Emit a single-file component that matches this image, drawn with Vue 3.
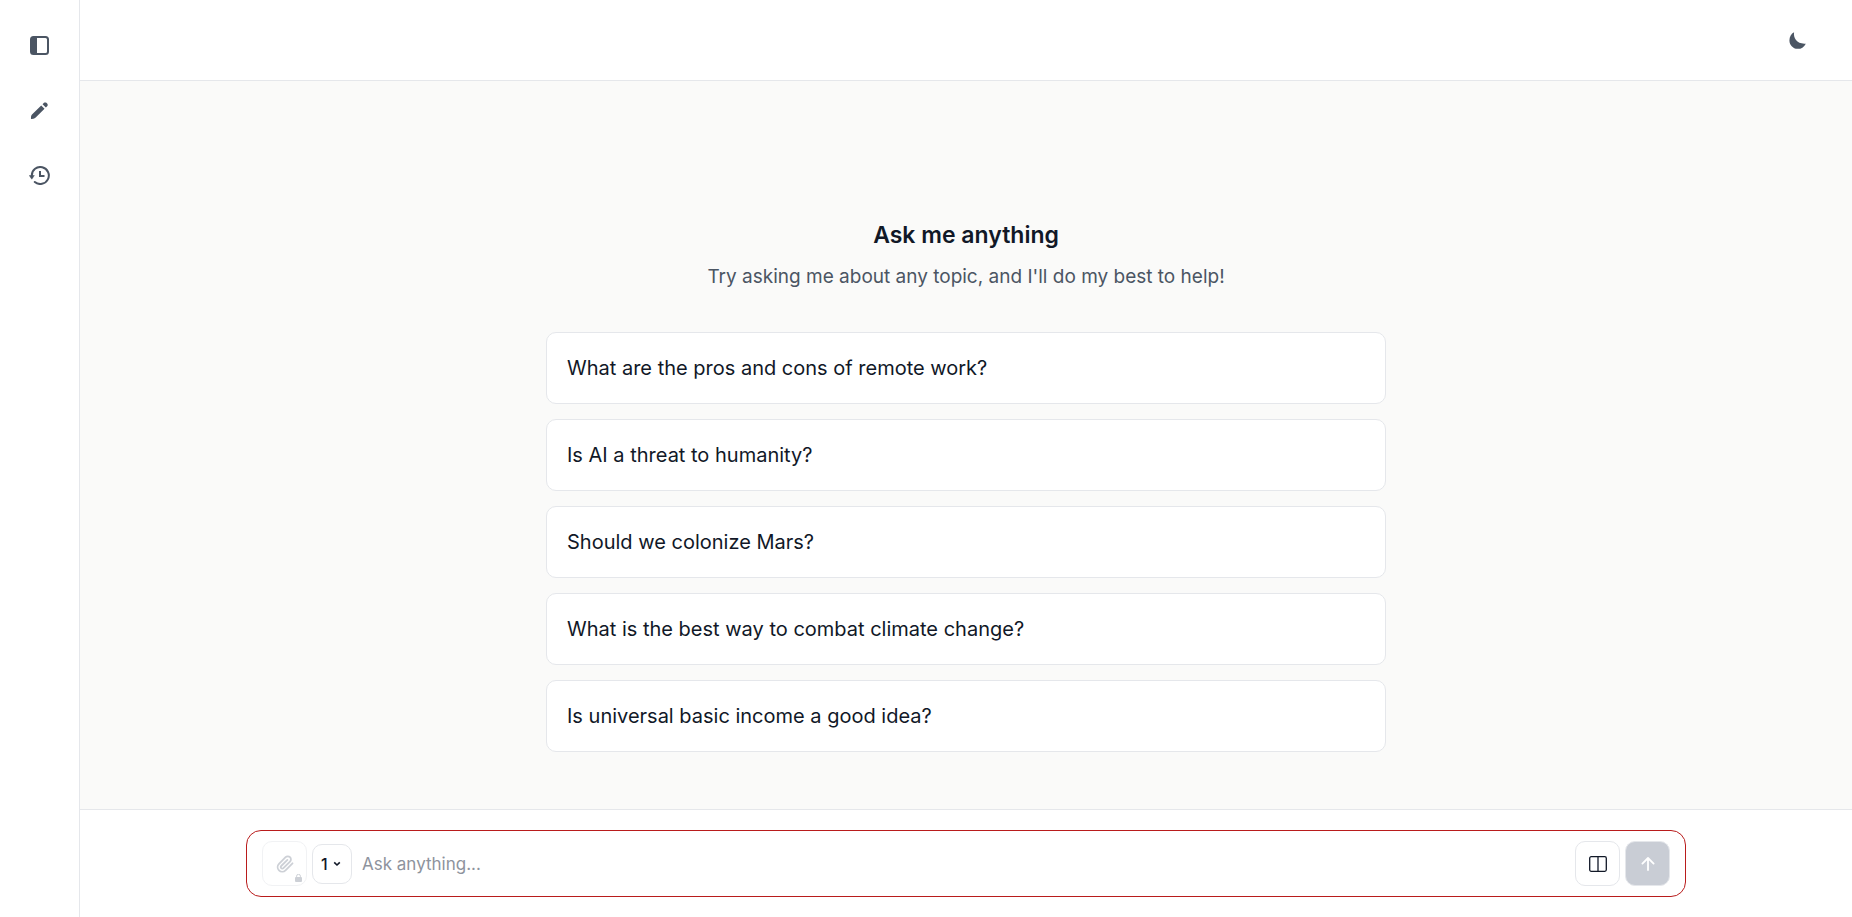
<template>
  <div class="app">
    <aside class="sidebar">
      <button class="icon-btn" type="button" aria-label="Toggle sidebar">
        <svg width="19" height="19" viewBox="0 0 19 19" fill="none">
          <rect x="1" y="1" width="17" height="17" rx="2.5" stroke="currentColor" stroke-width="2" />
          <path d="M1 2h6v15H1z" fill="currentColor" />
        </svg>
      </button>
      <button class="icon-btn" type="button" aria-label="New chat">
        <svg width="19" height="19" viewBox="0 0 20 20" fill="currentColor">
          <path d="M11.8 4.7 15.3 8.2 6 17.4C5.3 18.1 4.5 18.5 3.6 18.7L1.6 19C1.2 19 .9 18.7 1 18.3L1.1 16.4C1.2 15.6 1.5 14.9 2.1 14.3Z" />
          <path d="M13.2 3.3 14.7 1.8C17 .6 19.6 3.2 18.3 5.2L16.7 6.8Z" />
        </svg>
      </button>
      <button class="icon-btn" type="button" aria-label="History">
        <svg width="21" height="19" viewBox="0 0 21 19" fill="none" stroke="currentColor" stroke-width="2">
          <path d="M2.8 11V9.5a8.5 8.5 0 1 1 3 6.500" stroke-linecap="round" />
          <path d="M.3 9.500h5L2.800 13.200Z" fill="currentColor" stroke="currentColor" stroke-width=".5" />
          <path d="M11 5v5h4.500" />
        </svg>
      </button>
    </aside>

    <div class="page">
      <header class="topbar">
        <button class="icon-btn" type="button" aria-label="Dark mode">
          <svg width="19" height="19" viewBox="0 0 20 20" fill="currentColor">
            <path d="M6.4 1.4C5.3 7.6 9.8 14.2 18.8 13.3C16.7 17.3 13.5 19 10 18.8C5.2 18.5 1.5 14.6 1.5 9.9C1.5 6.1 3.4 2.8 6.4 1.4Z" />
          </svg>
        </button>
      </header>

      <main class="content">
        <h1>Ask me anything</h1>
        <p class="subtitle">Try asking me about any topic, and I'll do my best to help!</p>
        <div class="suggestions">
          <button v-for="item in suggestions" :key="item" type="button" class="suggestion" @click="message = item">
            {{ item }}
          </button>
        </div>
      </main>

      <footer class="bottom">
        <form class="composer" @submit.prevent="send">
          <button class="square attach" type="button" aria-label="Attach file" disabled>
            <svg width="18" height="18" viewBox="0 0 18 18" fill="none" stroke="currentColor" stroke-width="1.8" stroke-linecap="round" stroke-linejoin="round">
              <path d="m16.500 8.300-7 7a4.600 4.600 0 0 1-6.500 0 4.600 4.600 0 0 1 0-6.500l6.600-6.600a3.100 3.100 0 0 1 4.400 0 3.100 3.100 0 0 1 0 4.400l-6.600 6.600a1.500 1.500 0 0 1-2.200 0 1.500 1.500 0 0 1 0-2.200l6.200-6.100" />
            </svg>
            <svg class="lock" width="7" height="8" viewBox="0 0 7 8" fill="currentColor">
              <path d="M1.6 3.5V2.2a1.900 1.900 0 0 1 3.800 0v1.300" fill="none" stroke="currentColor" />
              <rect y="3" width="7" height="5" rx="1" />
            </svg>
          </button>
          <div class="count">
            <select v-model="count" aria-label="Number of answers">
              <option v-for="n in 4" :key="n" :value="n">{{ n }}</option>
            </select>
            <svg width="8" height="6" viewBox="0 0 8 6" fill="none" stroke="currentColor" stroke-width="1.6">
              <path d="M1.2 1.3 4 4 6.8 1.3" />
            </svg>
          </div>
          <input v-model="message" type="text" placeholder="Ask anything..." aria-label="Message" />
          <button class="square" type="button" aria-label="Split view">
            <svg width="18" height="16" viewBox="0 0 18 16" fill="none" stroke="currentColor" stroke-width="1.3">
              <rect x=".7" y=".7" width="16.600" height="14.600" rx="1.5" />
              <path d="M9 1v14" />
            </svg>
          </button>
          <button class="square send" type="submit" aria-label="Send">
            <svg width="14" height="14" viewBox="0 0 14 14" fill="none" stroke="currentColor" stroke-width="1.8" stroke-linecap="round" stroke-linejoin="round">
              <path d="M7 13V1M1.400 6.600 7 1l5.600 5.600" />
            </svg>
          </button>
        </form>
      </footer>
    </div>
  </div>
</template>

<script setup>
import { ref } from 'vue';

const suggestions = [
  'What are the pros and cons of remote work?',
  'Is AI a threat to humanity?',
  'Should we colonize Mars?',
  'What is the best way to combat climate change?',
  'Is universal basic income a good idea?',
];

const message = ref('');
const count = ref(1);

const send = () => {
  message.value = '';
};
</script>

<style>
body {
  margin: 0;
}
</style>

<style scoped>
* {
  box-sizing: border-box;
}
.app {
  display: flex;
  min-height: 100vh;
  font-family: Inter, "Liberation Sans", sans-serif;
  color: #111827;
  background: #ffffff;
}
button,
input,
select {
  font-family: inherit;
  color: inherit;
}
button {
  cursor: pointer;
}
svg {
  display: block;
}
.sidebar {
  width: 80px;
  flex-shrink: 0;
  display: flex;
  flex-direction: column;
  align-items: center;
  gap: 24px;
  padding-top: 25px;
  border-right: 1px solid #e5e7eb;
}
.icon-btn {
  width: 41px;
  height: 41px;
  display: flex;
  align-items: center;
  justify-content: center;
  padding: 0;
  border: none;
  background: none;
  color: #4b5563;
}
.page {
  flex: 1;
  min-width: 0;
  display: flex;
  flex-direction: column;
}
.topbar {
  display: flex;
  align-items: center;
  justify-content: flex-end;
  padding: 20px 34px 19px;
  border-bottom: 1px solid #e5e7eb;
}
.content {
  flex: 1;
  display: flex;
  flex-direction: column;
  align-items: center;
  justify-content: center;
  padding: 82px 20px 0;
  background: #fafaf9;
}
h1 {
  margin: 0 0 12px;
  font-size: 23px;
  line-height: 30px;
  font-weight: 600;
}
.subtitle {
  margin: 0 0 40px;
  font-size: 19px;
  line-height: 30px;
  color: #4b5563;
}
.suggestions {
  width: 100%;
  max-width: 840px;
  display: flex;
  flex-direction: column;
  gap: 15px;
}
.suggestion {
  padding: 20px;
  border: 1px solid #e5e7eb;
  border-radius: 10px;
  background: #ffffff;
  font-size: 20px;
  line-height: 30px;
  text-align: left;
}
.bottom {
  padding: 20px;
  border-top: 1px solid #e5e7eb;
}
.composer {
  max-width: 1440px;
  margin: 0 auto;
  padding: 10px 15px;
  display: flex;
  align-items: center;
  gap: 5px;
  border: 1px solid #b91c1c;
  border-radius: 15px;
}
.square {
  position: relative;
  width: 45px;
  height: 45px;
  flex-shrink: 0;
  display: flex;
  align-items: center;
  justify-content: center;
  padding: 0;
  border: 1px solid #e5e7eb;
  border-radius: 10px;
  background: #ffffff;
}
.attach {
  opacity: 0.5;
  color: #9ca3af;
}
.lock {
  position: absolute;
  right: 4px;
  bottom: 3px;
}
.count {
  position: relative;
}
.count select {
  display: block;
  width: 40px;
  height: 40px;
  padding: 0 0 0 8px;
  border: 1px solid #e5e7eb;
  border-radius: 10px;
  background: #ffffff;
  appearance: none;
  font-size: 16px;
  font-weight: 500;
}
.count svg {
  position: absolute;
  top: 17px;
  right: 11px;
  pointer-events: none;
}
.composer input {
  flex: 1;
  min-width: 0;
  height: 45px;
  padding: 0 5px;
  border: none;
  outline: none;
  background: none;
  font-size: 17px;
}
.composer input::placeholder {
  color: #8e939d;
}
.send {
  background: #c9cdd5;
  color: #ffffff;
}
</style>
